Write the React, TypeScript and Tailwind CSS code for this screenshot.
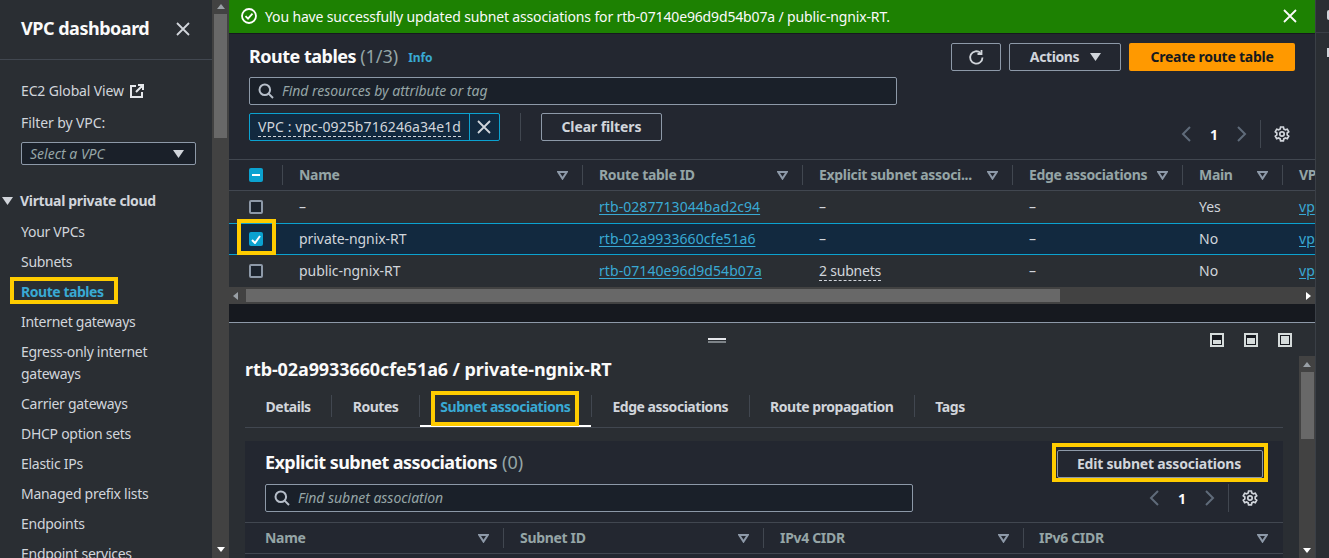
import React from "react";

const F = "font-['Noto_Sans',sans-serif]";

function Caret({ className = "" }: { className?: string }) {
  return (
    <svg width="11" height="8" viewBox="0 0 11 8" className={className}>
      <path d="M0 0h11L5.5 8z" fill="currentColor" />
    </svg>
  );
}

function SortIcon() {
  return (
    <svg width="11" height="9" viewBox="0 0 11 9" className="shrink-0 text-[#8d99a8]">
      <path d="M1.2 1h8.6L5.5 7.6z" fill="none" stroke="currentColor" strokeWidth="2" />
    </svg>
  );
}

function SearchIcon() {
  return (
    <svg width="16" height="16" viewBox="0 0 16 16" fill="none" stroke="#b6bec9" strokeWidth="2" className="shrink-0">
      <circle cx="6.8" cy="6.8" r="5.3" />
      <path d="M10.6 10.6l4.4 4.4" />
    </svg>
  );
}

function CloseIcon({ size = 14 }: { size?: number }) {
  return (
    <svg width={size} height={size} viewBox="0 0 14 14" fill="none" stroke="currentColor" strokeWidth="1.8">
      <path d="M1 1l12 12M13 1L1 13" />
    </svg>
  );
}

function Gear() {
  return (
    <svg width="16" height="16" viewBox="0 0 16 16" fill="none" stroke="#d1d5db" strokeWidth="1.7">
      <path d="M6.6 1h2.8l.4 2 1.6.9 1.9-.7 1.4 2.5-1.5 1.3v1.9l1.5 1.3-1.4 2.5-1.9-.7-1.6.9-.4 2H6.6l-.4-2-1.6-.9-1.9.7L1.3 10.2l1.5-1.3V7L1.3 5.7l1.4-2.5 1.9.7 1.6-.9z" />
      <circle cx="8" cy="8" r="2.2" />
    </svg>
  );
}

function Pager() {
  return (
    <div className="flex items-center">
      <svg width="10" height="16" viewBox="0 0 10 16" fill="none" stroke="#5f6b7a" strokeWidth="2">
        <path d="M9 1L2 8l7 7" />
      </svg>
      <span className="mx-[19px] text-[14px] font-bold text-[#fbfbfb]">1</span>
      <svg width="10" height="16" viewBox="0 0 10 16" fill="none" stroke="#5f6b7a" strokeWidth="2">
        <path d="M1 1l7 7-7 7" />
      </svg>
      <div className="ml-[13px] mr-[13px] h-[28px] w-px bg-[#414750]" />
      <Gear />
    </div>
  );
}

function Highlight({ className }: { className: string }) {
  return <div className={"pointer-events-none absolute border-4 border-[#ffcc00] " + className} />;
}

function HeadCell({ label, sort = true, divider = true }: { label: string; sort?: boolean; divider?: boolean }) {
  return (
    <div className="flex h-full min-w-0 items-center pl-[16px]">
      <span className="min-w-0 flex-1 whitespace-nowrap pb-[2px] text-[14px] font-bold tracking-[-0.32px] text-[#95a5a6]">{label}</span>
      {sort && <div className="mr-[14px]"><SortIcon /></div>}
      {divider && <div className="h-[20px] w-px bg-[#414750]" />}
    </div>
  );
}

function Check({ state }: { state: "none" | "checked" | "mixed" }) {
  if (state === "none")
    return <div className="h-[14px] w-[14px] rounded-[2px] border-2 border-[#8d99a8] bg-[#1b232d]" />;
  return (
    <div className="flex h-[14px] w-[14px] items-center justify-center rounded-[2px] bg-[#0ba2d0]">
      {state === "mixed" ? (
        <div className="h-[2px] w-[8px] bg-white" />
      ) : (
        <svg width="10" height="9" viewBox="0 0 10 9" fill="none" stroke="white" strokeWidth="2">
          <path d="M1 5l3 3 5-7" />
        </svg>
      )}
    </div>
  );
}

const link = "text-[#39a9d3] underline underline-offset-2 tracking-[0.06px]";
const tableCols = "grid grid-cols-[54px_300px_220px_210px_170px_100px_1fr]";

function Row({
  state, name, id, explicit, main, selected,
}: { state: "none" | "checked"; name: string; id: string; explicit: string; main: string; selected?: boolean }) {
  return (
    <div
      className={
        tableCols +
        " h-[32px] items-center overflow-hidden text-[14px] text-[#d1d5db] " +
        (selected ? "border-y border-[#0ba2d0] bg-[#12293f]" : "bg-[#2a2e33]")
      }
    >
      <div className="flex justify-center"><Check state={state} /></div>
      <div className="pb-[2px] pl-[16px] tracking-[-0.06px]">{name}</div>
      <div className="pb-[2px] pl-[16px]"><span className={link}>{id}</span></div>
      <div className="pb-[2px] pl-[16px]">
        {explicit === "2 subnets" ? (
          <span className="border-b border-dashed border-[#d1d5db] tracking-[-0.2px]">{explicit}</span>
        ) : (
          explicit
        )}
      </div>
      <div className="pb-[2px] pl-[16px]">–</div>
      <div className="pb-[2px] pl-[16px]">{main}</div>
      <div className="whitespace-nowrap pb-[2px] pl-[16px]"><span className={link}>vp</span></div>
    </div>
  );
}

const nav = [
  "Your VPCs", "Subnets", "Route tables", "Internet gateways", "Egress-only internet gateways",
  "Carrier gateways", "DHCP option sets", "Elastic IPs", "Managed prefix lists", "Endpoints", "Endpoint services",
];

function Sidebar() {
  return (
    <aside className="relative flex h-full w-[212px] shrink-0 flex-col overflow-hidden bg-[#2a2e33] text-[14px] text-[#d1d5db]">
      <div className="flex h-[60px] shrink-0 items-center justify-between border-b border-[#414750] pb-[2px] pl-[21px] pr-[22px]">
        <span className="text-[18px] font-bold tracking-[-0.48px] text-[#fafafa]">VPC dashboard</span>
        <span className="text-[#d1d5db]"><CloseIcon /></span>
      </div>
      <div className="mt-[20px] flex items-center pl-[21px] leading-[22px] tracking-[-0.13px]">
        EC2 Global View
        <svg width="14" height="14" viewBox="0 0 14 14" fill="none" stroke="#e5e7eb" strokeWidth="2" className="ml-[6px]">
          <path d="M6 2H1v11h11V8M8 1h5v5M13 1L6 8" />
        </svg>
      </div>
      <div className="mt-[10px] pl-[21px] leading-[22px] tracking-[-0.1px]">Filter by VPC:</div>
      <div className="ml-[21px] mt-[8px] flex h-[32px] w-[175px] items-center justify-between rounded-[2px] border border-[#8d99a8] bg-[#1a2029] pl-[8px] pr-[11px]">
        <span className="italic text-[#95a5a6]">Select a VPC</span>
        <Caret className="text-[#d1d5db]" />
      </div>
      <div className="mt-[25px] flex items-center pl-[2px] font-bold leading-[22px] tracking-[-0.33px]">
        <Caret className="mr-[7px] text-[#d1d5db]" />
        Virtual private cloud
      </div>
      <ul className="mt-[9px] flex flex-col gap-[8px] pl-[21px] pr-[16px] leading-[22px] tracking-[-0.28px]">
        {nav.map((n) => (
          <li key={n} className={n === "Route tables" ? "font-bold tracking-[-0.45px] text-[#39a9d3]" : ""}>{n}</li>
        ))}
      </ul>
      <Highlight className="left-[10px] top-[277px] h-[27px] w-[108px]" />
    </aside>
  );
}

function VScroll({ className, thumbH, top }: { className: string; thumbH: string; top: string }) {
  return (
    <div className={"flex flex-col items-center bg-[#424242] " + className}>
      <svg width="8" height="5" viewBox="0 0 8 5" className={top}><path d="M4 0l4 5H0z" fill="#9aa0a6" /></svg>
      <div className={"w-[13px] bg-[#686868] " + thumbH} />
      <div className="flex-1" />
      <svg width="8" height="5" viewBox="0 0 8 5" className="mb-[6px]"><path d="M0 0h8L4 5z" fill="#fff" /></svg>
    </div>
  );
}

function TopPanel() {
  return (
    <section className="relative h-[270px] shrink-0 bg-[#232730]">
      <div className="flex h-[125px] flex-col pl-[20px] pr-[20px] pt-[9px]">
        <div className="flex h-[28px] items-center">
          <span className="pb-[2px] text-[18px] font-bold tracking-[-0.5px] text-[#fafafa]">Route tables</span>
          <span className="ml-[4px] pb-[2px] text-[18px] text-[#95a5a6]">(1/3)</span>
          <span className="ml-[10px] mt-[1px] text-[12px] font-bold tracking-[-0.1px] text-[#39a9d3]">Info</span>
          <div className="ml-auto flex items-center gap-[8px]">
            <div className="flex h-[28px] w-[50px] items-center justify-center rounded-[2px] border border-[#8d99a8]">
              <svg width="17" height="17" viewBox="0 0 17 17" fill="none" stroke="#d1d5db" strokeWidth="1.8">
                <path d="M14.5 8.5a6.2 6.2 0 1 1-2-4.6" />
                <path d="M13.5 1v4h-4" />
              </svg>
            </div>
            <div className="flex h-[28px] w-[112px] items-center justify-center gap-[11px] rounded-[2px] border border-[#8d99a8] text-[14px] font-bold tracking-[-0.4px] text-[#d1d5db]">
              <span className="pb-[2px] pl-[1px]">Actions</span> <Caret className="text-[#d1d5db]" />
            </div>
            <div className="flex h-[28px] w-[166px] items-center justify-center rounded-[2px] bg-[#ff9900] pb-[2px] text-[14px] font-bold tracking-[-0.25px] text-[#16191f]">
              Create route table
            </div>
          </div>
        </div>
        <div className="mt-[6px] flex h-[28px] w-[648px] items-center rounded-[2px] border border-[#8d99a8] bg-[#1a2029] pb-px pl-[8px]">
          <SearchIcon />
          <span className="ml-[8px] text-[14px] italic tracking-[-0.03px] text-[#95a5a6]">Find resources by attribute or tag</span>
        </div>
        <div className="mt-[8px] flex h-[28px] items-start">
          <div className="flex h-[28px] items-center rounded-[2px] border border-[#0ba2d0] bg-[#12293f] text-[14px] text-[#d1d5db]">
            <span className="ml-[8px] mr-[8px] whitespace-nowrap border-b border-dashed border-[#d1d5db] leading-[18px] tracking-[0.08px]">VPC : vpc-0925b716246a34e1d</span>
            <div className="flex h-full w-[30px] items-center justify-center border-l border-[#0ba2d0]"><CloseIcon /></div>
          </div>
          <div className="ml-[20px] h-[28px] w-px bg-[#414750]" />
          <div className="ml-[20px] flex h-[28px] w-[121px] items-center justify-center rounded-[2px] border border-[#8d99a8] pb-[2px] text-[14px] font-bold tracking-[-0.1px] text-[#d1d5db]">
            Clear filters
          </div>
          <div className="ml-auto mr-[5px] mt-[7px]"><Pager /></div>
        </div>
      </div>
      <div className={tableCols + " h-[32px] items-center overflow-hidden border-y border-[#414750] bg-[#232730]"}>
        <div className="flex h-full items-center">
          <div className="flex flex-1 justify-center"><Check state="mixed" /></div>
          <div className="h-[20px] w-px bg-[#414750]" />
        </div>
        <HeadCell label="Name" />
        <HeadCell label="Route table ID" />
        <HeadCell label="Explicit subnet associ..." />
        <HeadCell label="Edge associations" />
        <HeadCell label="Main" />
        <HeadCell label="VPC" sort={false} divider={false} />
      </div>
      <Row state="none" name="–" id="rtb-0287713044bad2c94" explicit="–" main="Yes" />
      <Row state="checked" name="private-ngnix-RT" id="rtb-02a9933660cfe51a6" explicit="–" main="No" selected />
      <Row state="none" name="public-ngnix-RT" id="rtb-07140e96d9d54b07a" explicit="2 subnets" main="No" />
      <div className="flex h-[17px] items-center bg-[#424242] px-[4px]">
        <svg width="5" height="8" viewBox="0 0 5 8"><path d="M5 0v8L0 4z" fill="#9aa0a6" /></svg>
        <div className="ml-[8px] h-[13px] w-[814px] bg-[#686868]" />
        <div className="flex-1" />
        <svg width="5" height="8" viewBox="0 0 5 8"><path d="M0 0v8l5-4z" fill="#fff" /></svg>
      </div>
      <Highlight className="left-[8px] top-[185px] h-[36px] w-[39px]" />
    </section>
  );
}

function PanelIcon({ kind }: { kind: "low" | "mid" | "full" }) {
  return (
    <div className="flex h-[14px] w-[14px] flex-col justify-end border-2 border-[#d5dbdb] bg-[#16191f] p-px">
      <div className={"bg-[#d5dbdb] " + (kind === "low" ? "h-[4px]" : kind === "mid" ? "h-[6px]" : "h-[8px]")} />
    </div>
  );
}

const tabs = ["Details", "Routes", "Subnet associations", "Edge associations", "Route propagation", "Tags"];

function SplitPanel() {
  return (
    <section className="relative min-h-0 flex-1 overflow-hidden border-t border-[#8d99a8] bg-[#2a2e33]">
      <div className="flex h-[33px] items-center justify-center pr-[111px] pt-[2px]">
        <div className="flex flex-col gap-px">
          <div className="h-[2px] w-[18px] bg-[#e5e7eb]" />
          <div className="h-[2px] w-[18px] bg-[#7d8388]" />
        </div>
      </div>
      <div className="absolute right-[23px] top-[10px] flex gap-[20px]">
        <PanelIcon kind="low" />
        <PanelIcon kind="mid" />
        <PanelIcon kind="full" />
      </div>
      <div className="flex">
        <div className="w-[1070px] shrink-0 pl-[16px] pr-[16px]">
          <div className="pb-[2px] text-[18px] font-bold leading-[26px] tracking-[-0.1px] text-[#fafafa]">rtb-02a9933660cfe51a6 / private-ngnix-RT</div>
          <div className="relative mt-[9px] flex h-[35px] items-center border-b border-[#414750] pb-[8px]">
            {tabs.map((t, i) => (
              <div key={t} className="flex items-center">
                {i > 0 && <div className="h-[22px] w-px bg-[#414750]" />}
                <span
                  className={
                    "whitespace-nowrap px-[20.5px] text-[14px] font-bold tracking-[-0.47px] " +
                    (t === "Subnet associations" ? "text-[#39a9d3]" : "text-[#d1d5db]")
                  }
                >
                  {t}
                </span>
              </div>
            ))}
            <div className="absolute bottom-0 left-[175px] h-[2px] w-[171px] bg-white" />
          </div>
          <div className="relative mt-[13px] h-[200px] bg-[#232730]">
            <div className="flex items-center justify-between pl-[20px] pr-[20px] pt-[9px]">
              <div className="pb-[4px] text-[18px] font-bold leading-[24px] tracking-[-0.56px] text-[#fafafa]">
                Explicit subnet associations <span className="ml-[1px] font-normal tracking-normal text-[#95a5a6]">(0)</span>
              </div>
              <div className="flex h-[28px] w-[206px] items-center justify-center rounded-[2px] border border-[#8d99a8] pb-[2px] pr-[2px] text-[14px] font-bold tracking-[-0.2px] text-[#d1d5db]">
                Edit subnet associations
              </div>
            </div>
            <div className="mt-[6px] flex items-center pl-[20px] pr-[25px]">
              <div className="flex h-[28px] w-[648px] items-center rounded-[2px] border border-[#8d99a8] bg-[#1a2029] pb-px pl-[8px]">
                <SearchIcon />
                <span className="ml-[8px] text-[14px] italic tracking-[-0.03px] text-[#95a5a6]">Find subnet association</span>
              </div>
              <div className="ml-auto"><Pager /></div>
            </div>
            <div className="mt-[10px] grid h-[32px] grid-cols-[259px_260px_260px_1fr] items-center border-y border-[#414750]">
              <div className="flex h-full items-center pl-[20px]">
                <span className="flex-1 pb-[2px] text-[14px] font-bold tracking-[-0.32px] text-[#95a5a6]">Name</span>
                <div className="mr-[14px]"><SortIcon /></div>
                <div className="h-[20px] w-px bg-[#414750]" />
              </div>
              <HeadCell label="Subnet ID" />
              <HeadCell label="IPv4 CIDR" />
              <div className="flex h-full items-center pl-[15px] pr-[15px]">
                <span className="flex-1 pb-[2px] text-[14px] font-bold tracking-[-0.32px] text-[#95a5a6]">IPv6 CIDR</span>
                <SortIcon />
              </div>
            </div>
            <Highlight className="right-[15px] top-[2px] h-[39px] w-[216px]" />
          </div>
        </div>
        <div className="ml-auto flex h-[203px] w-[17px] flex-col">
          <VScroll className="h-full w-full" thumbH="h-[67px]" top="mb-[5px] mt-[6px]" />
        </div>
      </div>
      <Highlight className="left-[202px] top-[68px] h-[35px] w-[148px]" />
    </section>
  );
}

export default function App() {
  return (
    <div className={"flex h-[558px] w-[1329px] overflow-hidden bg-[#2a2e33] " + F}>
      <Sidebar />
      <VScroll className="h-full w-[17px] shrink-0" thumbH="h-[124px]" top="mb-[5px] mt-[4px]" />
      <main className="flex h-full w-[1086px] shrink-0 flex-col bg-[#16191f]">
        <div className="flex h-[33px] shrink-0 items-center justify-between bg-[#1d8102] pb-[1px] pl-[12px] pr-[18px] text-[14px] text-[#fafafa]">
          <div className="flex items-center gap-[8px] tracking-[-0.15px]">
            <svg width="16" height="16" viewBox="0 0 16 16" fill="none" stroke="white" strokeWidth="1.8">
              <circle cx="8" cy="8" r="7" />
              <path d="M4.5 8.2l2.5 2.5 4.5-5" />
            </svg>
            You have successfully updated subnet associations for rtb-07140e96d9d54b07a / public-ngnix-RT.
          </div>
          <CloseIcon />
        </div>
        <div className="h-px shrink-0 bg-[#16191f]" />
        <TopPanel />
        <div className="h-[18px] shrink-0 bg-[#16191f]" />
        <SplitPanel />
      </main>
      <div className="relative h-full flex-1 border-l border-[#3a3f46] bg-[#2a2e33]">
        <div className="h-[33px] border-b border-[#3a3f46]" />
        <div className="absolute right-0 top-[10px] h-[10px] w-[2px] rounded-l-full bg-[#d1d5db]" />
        <div className="absolute right-0 top-[48px] h-[9px] w-[2px] bg-[#d1d5db]" />
      </div>
    </div>
  );
}
